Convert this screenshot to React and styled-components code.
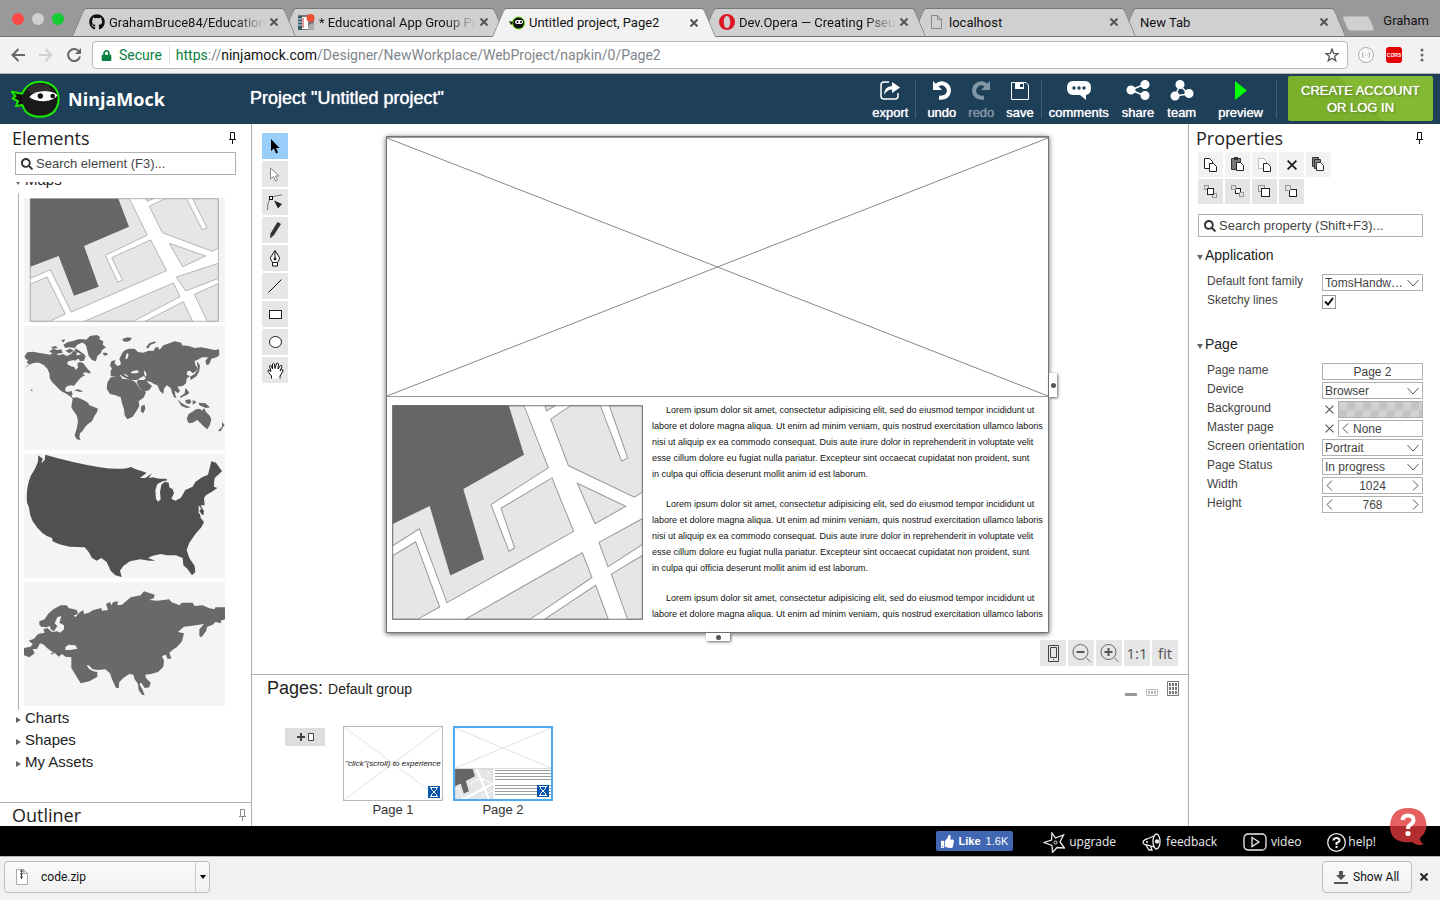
import React from "react";
import styled, { createGlobalStyle, css } from "styled-components";
import { FaGithub, FaSearch, FaThumbsUp, FaLock } from "react-icons/fa";

const ui = '"Liberation Sans", Arial, sans-serif';
const chromeFont = 'Roboto, "Helvetica Neue", sans-serif';
const humanist = '"Open Sans", "Segoe UI", sans-serif';
const hand = 'TomsHandwritten, "Liberation Sans", sans-serif';
const line = "#b0b0b0";

const Global = createGlobalStyle`
  *, *::before, *::after { box-sizing: border-box; }
  body { margin: 0; background: #fff; font-family: ${ui}; font-size: 13px; color: #333; }
  button, input, select { font: inherit; color: inherit; margin: 0; }
  button { border: 0; padding: 0; background: none; cursor: pointer; }
  a { color: inherit; text-decoration: none; }
  h1, h2, h3, p, ul { margin: 0; padding: 0; font-weight: normal; }
  svg { display: block; }
`;

const Window = styled.div`
  display: flex;
  flex-direction: column;
  height: 100vh;
  min-height: 640px;
  overflow: hidden;
`;

/* ---------- browser frame ---------- */

const TabStrip = styled.div`
  display: flex;
  align-items: flex-end;
  height: 37px;
  flex: none;
  padding: 0 11px 0 8px;
  background: #999;
  box-shadow: inset 0 -1px #737373;
  font-family: ${chromeFont};
  isolation: isolate;
`;
const Lights = styled.div`
  display: flex;
  gap: 8px;
  align-self: flex-start;
  width: 64px;
  flex: none;
  padding: 13px 4px;
`;
const Light = styled.button`
  width: 12px;
  height: 12px;
  border-radius: 50%;
  background: ${(p) => p.$color};
`;
const Tab = styled.div`
  position: relative;
  z-index: ${(p) => p.$z};
  isolation: isolate;
  display: flex;
  align-items: center;
  flex: 0 1 224px;
  min-width: 0;
  height: ${(p) => (p.$active ? 29 : 28)}px;
  margin-bottom: ${(p) => (p.$active ? 0 : 1)}px;
  margin-right: -14px;
  padding: 0 18px 0 ${(p) => (p.$icon ? 16 : 18)}px;
  gap: 4px;
  color: #111;
  &::before,
  &::after {
    content: "";
    position: absolute;
    z-index: -1;
    top: 0;
    bottom: 0;
    background: ${(p) => (p.$active ? "#f2f2f2" : "#d0d0d0")};
    border: 0 solid #777;
    border-top-width: 1px;
  }
  &::before {
    left: 6px;
    right: 40%;
    border-left-width: 1px;
    border-top-left-radius: 3px;
    transform: skewX(-23deg);
  }
  &::after {
    right: 6px;
    left: 40%;
    border-right-width: 1px;
    border-top-right-radius: 3px;
    transform: skewX(23deg);
  }
`;
const TabTitle = styled.button`
  flex: 1;
  min-width: 0;
  overflow: hidden;
  white-space: nowrap;
  text-align: left;
  font-size: 13px;
  ${(p) => p.$fade && css`mask-image: linear-gradient(90deg, #000 80%, transparent);`}
`;
const IconSlot = styled.span`
  display: grid;
  place-items: center;
  width: 17px;
  height: 17px;
  flex: none;
`;
const NewTab = styled.button`
  width: 27px;
  height: 15px;
  margin: 0 0 6px 13px;
  border: 1px solid #b8b8b8;
  border-radius: 3px;
  background: #d0d0d0;
  transform: skewX(23deg);
`;
const Profile = styled.span`
  margin: 0 0 9px auto;
  font-size: 13px;
  color: #111;
`;
const Toolbar = styled.div`
  display: flex;
  align-items: center;
  flex: none;
  height: 37px;
  padding: 0 4px 0 10px;
  background: #f2f2f2;
  border-bottom: 1px solid #b5b5b5;
  font-family: ${chromeFont};
`;
const ChromeButton = styled.button`
  display: grid;
  place-items: center;
  width: 28px;
  height: 28px;
  margin-left: ${(p) => (p.$first ? -6 : 0)}px;
  flex: none;
`;
const Address = styled.form`
  display: flex;
  align-items: center;
  flex: 1;
  height: 28px;
  margin: 0 4px;
  padding: 0 8px;
  border: 1px solid #b9b9b9;
  border-radius: 4px;
  background: #fff;
  font-size: 14px;
  color: #80868b;
`;
const Secure = styled.span`
  display: flex;
  align-items: center;
  gap: 7px;
  padding-right: 7px;
  margin-right: 6px;
  border-right: 1px solid #ddd;
  line-height: 20px;
  color: #0b8043;
`;
const Url = styled.a`
  flex: 1;
  b { font-weight: normal; color: #111; }
  i { font-style: normal; color: #0b8043; }
`;

/* ---------- application header ---------- */

const Header = styled.header`
  display: flex;
  align-items: center;
  flex: none;
  height: 50px;
  padding: 0 7px 1px 10px;
  background: #1d3f58;
  color: #fff;
`;
const Brand = styled.a`
  display: flex;
  align-items: center;
  gap: 6px;
  width: 240px;
  flex: none;
  font: 700 18px/24px ${humanist};
`;
const ProjectTitle = styled.h1`
  flex: 1;
  font-size: 18px;
  text-shadow: 0 0 1px #fff;
`;
const ToolGroup = styled.div`
  display: flex;
  gap: ${(p) => p.$gap || 12}px;
  height: 38px;
  padding: 0 ${(p) => p.$right || 7}px 0 ${(p) => p.$left || 7}px;
  border-right: ${(p) => (p.$open ? 0 : 1)}px solid #3f5f76;
`;
const HeaderTool = styled.button`
  display: flex;
  flex-direction: column;
  align-items: center;
  gap: 3px;
  font-size: 13px;
  line-height: 16px;
  text-shadow: 0 0 1px currentColor;
  color: ${(p) => (p.$off ? "#8296a5" : "#fff")};
  svg { height: 22px; flex: none; }
`;
const Cta = styled.button`
  width: 145px;
  height: 45px;
  margin-left: 11px;
  border-radius: 2px;
  background: linear-gradient(45deg, #7ab02c 50%, #84b933 50%);
  font-size: 13px;
  line-height: 17px;
  text-shadow: 0 0 1px #fff, 1px 1px 2px #4c7015;
`;

/* ---------- work area ---------- */

const Body = styled.div`
  display: flex;
  flex: 1;
  min-height: 0;
`;
const Side = styled.aside`
  display: flex;
  flex-direction: column;
  width: 252px;
  flex: none;
  border: 0 solid ${line};
  border-${(p) => p.$edge}-width: 1px;
`;
const PanelHead = styled.div`
  display: flex;
  align-items: center;
  justify-content: space-between;
  flex: none;
  height: ${(p) => (p.$short ? 23 : 28)}px;
  padding: 0 ${(p) => p.$right}px 0 ${(p) => p.$left}px;
`;
const PanelTitle = styled.h2`
  font: 18px/24px ${humanist};
  color: #222;
`;
const SearchBox = styled.label`
  display: flex;
  align-items: center;
  gap: 3px;
  flex: none;
  height: 23px;
  margin: 0 ${(p) => p.$right}px 0 ${(p) => p.$left}px;
  padding: 0 5px;
  border: 1px solid ${line};
  input {
    flex: 1;
    min-width: 0;
    border: 0;
    outline: 0;
    padding: 0;
    background: none;
    &::placeholder { color: #444; opacity: 1; }
  }
`;
const Tree = styled.div`
  flex: 1;
  min-height: 0;
  margin-top: 7px;
  padding-left: 15px;
  overflow: hidden;
`;
const TreeItem = styled.button`
  display: flex;
  align-items: baseline;
  gap: 4px;
  height: 22px;
  margin-top: ${(p) => (p.$scrolled ? -13 : 0)}px;
  font-size: 15px;
  line-height: 22px;
  color: #222;
`;
const MapList = styled.div`
  display: flex;
  flex-direction: column;
  gap: 4px;
  margin: 2px 0 -3px 3px;
  padding: 5px 0 4px 5px;
  border-left: 1px solid ${line};
`;
const MapTile = styled.button`
  width: 201px;
  height: 124px;
  flex: none;
  background: #f4f4f4;
`;
const Outliner = styled.div`
  flex: none;
  border-top: 1px solid ${line};
`;

const Main = styled.main`
  display: flex;
  flex-direction: column;
  flex: 1;
  min-width: 0;
`;
const Stage = styled.section`
  position: relative;
  display: flex;
  flex: 1;
  min-height: 0;
  padding: 9px 0 0 10px;
`;
const ToolColumn = styled.div`
  display: flex;
  flex-direction: column;
  gap: 2px;
  flex: none;
`;
const Square = styled.button`
  display: grid;
  place-items: center;
  width: 26px;
  height: 26px;
  background: ${(p) => (p.$on ? "#99cefb" : "#e6e6e6")};
  font: 15px/24px ${humanist};
  white-space: nowrap;
  color: #555;
`;
const ArtboardArea = styled.div`
  display: flex;
  justify-content: center;
  align-items: flex-start;
  flex: 1;
  min-width: 0;
  padding: 3px 41px 0 0;
`;
const Artboard = styled.article`
  position: relative;
  width: 663px;
  max-width: 100%;
  border: 1px solid #777;
  box-shadow: 0 1px 5px rgba(0, 0, 0, 0.65);
`;
const Placeholder = styled.div`
  height: 260px;
  border: 1px solid #999;
  border-width: 1px 0;
  svg { width: 100%; height: 100%; }
`;
const Split = styled.div`
  display: flex;
  gap: 9px;
  height: 235px;
  padding: 8px 5px 7px 5px;
`;
const Copy = styled.div`
  flex: 1;
  height: 220px;
  margin-top: -3px;
  overflow: hidden;
  white-space: pre;
  font: 9px/16px ${hand};
  color: #111;
  p { margin-bottom: 14px; text-indent: 14px; }
`;
const Handle = styled.button`
  position: absolute;
  display: grid;
  place-items: center;
  background: #fff;
  box-shadow: 1px 1px 3px rgba(0, 0, 0, 0.6);
  &::after { content: ""; width: 5px; height: 5px; border-radius: 50%; background: #555; }
  ${(p) =>
    p.$side === "right"
      ? css`right: -9px; top: 236px; width: 8px; height: 24px;`
      : css`bottom: -9px; left: 319px; width: 24px; height: 8px;`}
`;
const ZoomBar = styled.div`
  position: absolute;
  right: 10px;
  bottom: 8px;
  display: flex;
  gap: 2px;
`;

const PagesPanel = styled.section`
  flex: none;
  border-top: 1px solid ${line};
  padding: 2px 9px 8px 15px;
`;
const PagesHead = styled.div`
  display: flex;
  align-items: baseline;
  gap: 5px;
  height: 22px;
  font-size: 14px;
  line-height: 22px;
  color: #222;
  h2 { font-size: 18px; }
`;
const ViewModes = styled.div`
  display: flex;
  align-items: flex-end;
  align-self: center;
  gap: 9px;
  margin-left: auto;
`;
const PagesRow = styled.div`
  display: flex;
  gap: 10px;
  padding: 27px 0 0 18px;
`;
const AddPage = styled.button`
  display: flex;
  align-items: center;
  justify-content: center;
  gap: 3px;
  width: 40px;
  height: 18px;
  margin: 2px 8px 0 0;
  background: #dedede;
`;
const Thumb = styled.figure`
  margin: 0;
  width: 100px;
  text-align: center;
  font-size: 13px;
  line-height: 17px;
`;
const ThumbPage = styled.div`
  position: relative;
  display: flex;
  flex-direction: column;
  height: 75px;
  overflow: hidden;
  border: ${(p) => (p.$on ? "2px solid #4cabf7" : "1px solid #b8b8b8")};
`;
const ThumbImage = styled.div`
  display: grid;
  grid-template: minmax(0, 1fr) / minmax(0, 1fr);
  flex: ${(p) => (p.$full ? "1 1 0" : "0 0 41px")};
  min-height: 0;
  border-bottom: ${(p) => (p.$full ? 0 : 1)}px solid #ddd;
  font: italic 8px/12px ${hand};
  color: #111;
  > * { grid-area: 1 / 1; }
  span { place-self: center; white-space: nowrap; }
  svg { width: 100%; height: 100%; }
`;
const ThumbRow = styled.div`
  display: flex;
  flex: 1;
  gap: 2px;
`;
const ThumbText = styled.div`
  flex: 1;
  display: flex;
  flex-direction: column;
  gap: 5px;
  padding-top: 1px;
`;
const ThumbLines = styled.div`
  height: 10px;
  background: repeating-linear-gradient(#9b9f99 0 1px, #fff 1px 3px);
`;
const Badge = styled.span`
  position: absolute;
  right: 2px;
  bottom: 2px;
  display: grid;
  place-items: center;
  width: 12px;
  height: 12px;
  background: #0a57b0;
`;

/* ---------- properties ---------- */

const IconGrid = styled.div`
  display: grid;
  grid-template-columns: repeat(5, 25px);
  gap: 2px;
  margin: 0 0 10px 9px;
`;
const PropButton = styled.button`
  display: grid;
  place-items: center;
  height: 25px;
  background: ${(p) => (p.$dark ? "#e5e5e5" : "#f2f2f2")};
`;
const Section = styled.section`
  padding: 8px 17px 0 8px;
  margin-bottom: 15px;
`;
const SectionTitle = styled.h3`
  display: flex;
  align-items: baseline;
  gap: 2px;
  font-size: 14px;
  line-height: 20px;
  color: #222;
  margin-bottom: 8px;
`;
const Field = styled.div`
  display: flex;
  height: 19px;
  padding-left: 10px;
  font-size: 12px;
  label { flex: 1; line-height: 16px; color: #444; }
`;
const Control = styled.div`
  position: relative;
  display: flex;
  align-items: center;
  gap: 1px;
  width: 101px;
  height: 17px;
  margin-top: 1px;
  color: #444;
  > svg { position: absolute; right: 4px; pointer-events: none; }
`;
const Clear = styled.button`
  display: grid;
  place-items: center;
  width: 15px;
  height: 17px;
`;
const box = css`
  flex: 1;
  min-width: 0;
  height: 17px;
  border: 1px solid ${line};
  border-radius: 0;
  background: #fff;
  outline: 0;
`;
const Select = styled.select`
  ${box}
  appearance: none;
  padding: 0 18px 0 2px;
`;
const TextInput = styled.input`
  ${box}
  padding: 0;
  text-align: center;
`;
const Stepper = styled.div`
  ${box}
  display: flex;
  align-items: center;
  padding: 0 3px;
  input {
    flex: 1;
    min-width: 0;
    height: 14px;
    padding: 0 0 0 ${(p) => (p.$left ? 4 : 0)}px;
    border: 0;
    outline: 0;
    text-align: ${(p) => (p.$left ? "left" : "center")};
  }
`;
const Swatch = styled.button`
  ${box}
  background: repeating-conic-gradient(#c4c4c4 0 25%, #d1d1d1 0 50%) 0 0 / 16px 16px;
`;
const Check = styled.input`
  appearance: none;
  width: 14px;
  height: 14px;
  border: 1px solid #999;
  & + svg { left: 2px; }
`;

/* ---------- footer and downloads ---------- */

const Footer = styled.footer`
  position: relative;
  display: flex;
  align-items: center;
  justify-content: flex-end;
  gap: 26px;
  flex: none;
  height: 30px;
  padding-right: 64px;
  background: #000;
  color: #eee;
  font: 12px/20px ${humanist};
`;
const FooterLink = styled.a`
  display: flex;
  align-items: center;
  gap: ${(p) => p.$gap || 4}px;
  padding-top: 2px;
`;
const Like = styled.button`
  display: flex;
  align-items: center;
  gap: 5px;
  height: 20px;
  margin-right: 4px;
  padding: 0 5px;
  border-radius: 2px;
  background: #4267b2;
  color: #fff;
  font: 11px/20px ${ui};
`;
const Bubble = styled.button`
  position: absolute;
  right: 13px;
  bottom: 10px;
`;
const Downloads = styled.div`
  display: flex;
  align-items: center;
  justify-content: space-between;
  flex: none;
  height: 44px;
  padding: 0 12px 3px 4px;
  border-top: 1px solid #b5b5b5;
  background: #f1f1f1;
  font: 12px/16px ${chromeFont};
  color: #111;
`;
const Pill = styled.div`
  display: flex;
  align-items: center;
  height: 32px;
  border: 1px solid #bdbdbd;
  border-radius: 4px;
  background: linear-gradient(#fafafa, #f1f1f1);
  width: ${(p) => p.$w}px;
`;
const PillMain = styled.button`
  display: flex;
  align-items: center;
  gap: ${(p) => p.$gap}px;
  flex: 1;
  padding-left: 11px;
  height: 30px;
`;
const PillMenu = styled.button`
  display: grid;
  place-items: center;
  width: 14px;
  height: 30px;
  border-left: 1px solid #ccc;
`;
const Row = styled.div`
  display: flex;
  align-items: center;
  gap: 8px;
`;

/* ---------- drawings ---------- */

const Cross = ({ size = 8, color = "#555", w = 2 }) => (
  <svg width={size} height={size} viewBox="0 0 8 8" stroke={color} strokeWidth={w} fill="none">
    <path d="M0.5 0.5L7.5 7.5M7.5 0.5L0.5 7.5" />
  </svg>
);
const Pin = ({ color = "#111" }) => (
  <svg width="7" height="12" viewBox="0 0 7 12" fill="none" stroke={color}>
    <path d="M1.500 7V0.500H5.500V7M0 7.500H7M3.500 8V12" />
  </svg>
);
const Arrow = ({ open }) => (
  <svg width="6" height="6" viewBox="0 0 6 6" fill="#666">
    <path d={open ? "M0 1H6L3 6Z" : "M1 0L6 3L1 6Z"} />
  </svg>
);
const Chevron = () => (
  <svg width="12" height="8" viewBox="0 0 12 8" fill="none" stroke="#555">
    <path d="M0.5 1L6 7L11.5 1" />
  </svg>
);
const Angle = ({ right }) => (
  <svg width="7" height="11" viewBox="0 0 7 11" fill="none" stroke="#555">
    <path d={right ? "M1 0.5L6 5.5L1 10.5" : "M6 0.5L1 5.5L6 10.5"} />
  </svg>
);

const NinjaLogo = () => (
  <svg width="52" height="38" viewBox="30 240 156 114">
    <path d="M35 275L66 281Q84 244 122 245Q176 250 176 298Q172 350 118 350Q78 350 67 315L48 318L54 303L38 296L46 288Z" fill="#191919" stroke="#19e800" strokeWidth="6" strokeLinejoin="round" />
    <path d="M40 280L66 286L64 310L52 314L62 302L44 294L62 292Z" fill="#0d0d0d" />
    <ellipse cx="118" cy="268" rx="34" ry="16" fill="#444" opacity="0.5" />
    <path d="M88 290Q104 274 136 273Q162 274 172 286Q166 300 132 304Q100 303 88 290Z" fill="#fff" />
    <circle cx="121" cy="288" r="8" fill="#111" />
    <circle cx="158" cy="288" r="7" fill="#111" />
  </svg>
);
const NinjaSmall = () => (
  <svg width="16" height="14" viewBox="0 0 16 14">
    <ellipse cx="9.500" cy="7" rx="6" ry="6" fill="#111" stroke="#6fd400" />
    <path d="M0 5L5 6L2 9Z" fill="#111" stroke="#6fd400" strokeWidth="0.5" />
    <rect x="6" y="4" width="8" height="4" rx="2" fill="#fff" />
    <circle cx="8.500" cy="6" r="1" /><circle cx="12" cy="6" r="1" />
  </svg>
);
const AppFavicon = () => (
  <svg width="17" height="17" viewBox="0 0 17 17">
    <rect x="0" y="1" width="16" height="15" fill="#777" />
    <path d="M0 2H4V16H0Z" fill="#3b5c63" /><path d="M0 5H4M0 8H4M0 11H4" stroke="#d0e0e0" />
    <rect x="4" y="3" width="6" height="12" fill="#fff" /><path d="M5 4V14" stroke="#b33" />
    <path d="M10 11L16 9V16H10Z" fill="#aaa" />
    <circle cx="12.500" cy="4" r="4" fill="#ed4f32" />
  </svg>
);
const OperaO = () => (
  <svg width="16" height="16" viewBox="0 0 16 16">
    <path fillRule="evenodd" fill="#dd1425" d="M8 0A8 8 0 1 1 8 16A8 8 0 1 1 8 0ZM8 2C5.800 2 4.800 5 4.800 8S5.800 14 8 14S11.200 11 11.200 8S10.200 2 8 2Z" />
  </svg>
);
const FileIcon = () => (
  <svg width="11" height="14" viewBox="0 0 11 14" fill="none" stroke="#888">
    <path d="M0.5 0.5H6.5L10.500 4.500V13.500H0.500ZM6.500 0.500V4.500H10.500" />
  </svg>
);
const ZipIcon = () => (
  <svg width="12" height="16" viewBox="0 0 12 16">
    <path d="M0.5 0.5H7.5L11.500 4.500V15.500H0.500Z" fill="#fff" stroke="#aaa" />
    <path d="M7.500 0.500V4.500H11.500Z" fill="#ddd" stroke="#aaa" />
    <path d="M5.500 1V9" stroke="#444" strokeWidth="2" strokeDasharray="2 1" />
    <path d="M5.500 2V10" stroke="#444" />
  </svg>
);

const headerIcons = {
  export: (
    <svg width="20" height="22" viewBox="0 0 20 22" fill="none" stroke="#fff" strokeWidth="1.500">
      <path d="M9 2H4Q1 2 1 5V16Q1 19 4 19H15Q18 19 18 16V13" />
      <path d="M4 15Q4 6.500 12 6V2L20 7.500L12 13V9.500Q7 9.500 4 15Z" fill="#fff" stroke="none" />
    </svg>
  ),
  undo: (
    <svg width="20" height="22" viewBox="0 0 20 22" fill="none" stroke="currentColor" strokeWidth="4">
      <path d="M4 6Q9 1.500 13.500 4.500Q18 7.500 16.500 13Q14.500 18.500 7 17.500" />
      <path d="M1 1V10H10Z" fill="currentColor" stroke="none" />
    </svg>
  ),
  redo: (
    <svg width="20" height="22" viewBox="0 0 20 22" fill="none" stroke="currentColor" strokeWidth="4">
      <path d="M16 6Q11 1.500 6.500 4.500Q2 7.500 3.500 13Q5.500 18.500 13 17.500" />
      <path d="M19 1V10H10Z" fill="currentColor" stroke="none" />
    </svg>
  ),
  save: (
    <svg width="18" height="22" viewBox="0 0 18 22">
      <path d="M0.500 2.500H15L17.500 5V19.500H0.500Z" fill="none" stroke="#fff" />
      <path d="M4 3H13V9H4Z" fill="#fff" /><path d="M9 4H12V7H9Z" fill="#1d3f58" />
    </svg>
  ),
  comments: (
    <svg width="24" height="22" viewBox="0 0 24 22">
      <path d="M6 1H18Q24 1 24 8Q24 14 19 15V20L13 15H6Q0 15 0 8Q0 1 6 1Z" fill="#fff" />
      <g fill="#1d3f58"><circle cx="7" cy="8" r="1.700" /><circle cx="12" cy="8" r="1.700" /><circle cx="17" cy="8" r="1.700" /></g>
    </svg>
  ),
  share: <svg width="24" height="22" viewBox="0 0 24 22" stroke="#fff" strokeWidth="1.500" fill="#fff"><path d="M19 4L5 10L19 16" fill="none" /><circle cx="19" cy="4.500" r="3.800" /><circle cx="5" cy="10" r="3.800" /><circle cx="19" cy="15.500" r="3.800" /></svg>,
  team: <svg width="24" height="22" viewBox="0 0 24 22" stroke="#fff" strokeWidth="1.500" fill="#fff"><path d="M10 5L5 16L18 14Z" fill="none" /><circle cx="10" cy="4.500" r="3.800" /><circle cx="5" cy="16" r="3.800" /><circle cx="19" cy="13.500" r="3.800" /></svg>,
  preview: <svg width="14" height="22" viewBox="0 0 14 22" fill="#0f0"><path d="M1 1L13 10.500L1 20Z" /></svg>,
};

const canvasTools = [
  ["Select", <svg width="10" height="15" viewBox="0 0 10 15" fill="#000"><path d="M1 0V12L4 9.500L6 14.500L8 13.500L6 9H9.500Z" /></svg>],
  ["Direct select", <svg width="10" height="15" viewBox="0 0 10 15" fill="#fff" stroke="#888"><path d="M0.5 1V12L3.500 9.500L5.500 14L7.500 13L5.500 9H9Z" /></svg>],
  ["Edit points", <svg width="18" height="18" viewBox="0 0 18 18" fill="none" stroke="#777"><path d="M6 4Q10 2.500 16 2M3.500 7Q1 11 1.500 17" /><rect x="3.500" y="3.500" width="3" height="3" fill="#fff" stroke="#111" /><path d="M8 7.500L16 11L12 15.500Z" fill="#222" stroke="none" /></svg>],
  ["Pencil", <svg width="12" height="17" viewBox="0 0 12 17" fill="#333"><path d="M8.500 0L12 2L5 13L1 16.500L1.500 11.500Z" /></svg>],
  ["Pen", <svg width="12" height="17" viewBox="0 0 12 17" fill="#fff" stroke="#111"><path d="M3.500 12.500Q1 9 1.500 7.500L6 0.500L10.500 7.500Q11 9 8.500 12.500Z" /><path d="M3.500 12.500H8.500V16H3.500ZM6 1V9" /><circle cx="6" cy="9" r="1" fill="#111" /></svg>],
  ["Line", <svg width="14" height="14" viewBox="0 0 14 14" stroke="#111"><path d="M0.500 13.500L13.500 0.500" /></svg>],
  ["Rectangle", <svg width="13" height="9" viewBox="0 0 13 9"><rect x="0.500" y="0.500" width="12" height="8" fill="#fff" stroke="#222" /></svg>],
  ["Ellipse", <svg width="13" height="12" viewBox="0 0 13 12"><ellipse cx="6.500" cy="6" rx="6" ry="5.500" fill="#fff" stroke="#222" /></svg>],
  ["Pan", <svg width="17" height="17" viewBox="0 0 17 17" fill="#fff" stroke="#111"><path d="M4.500 16.500V14L1 9.500Q0.500 8 2 8L4 9.500L2.500 4.500Q2.500 3 4 3.500L5.500 7L5.500 2Q6.500 0.500 7.500 2L8 6.500L9.500 1.500Q11 0.500 11.500 2L11 7L13.500 3.500Q15 3 15 4.500L13 9L14.500 7.500Q16.500 7.500 16 9L13 14V16.500" /></svg>],
];

const Magnifier = ({ plus }) => (
  <svg width="19" height="20" viewBox="0 0 19 20" fill="none" stroke="#666">
    <circle cx="8.500" cy="9" r="7.500" />
    <path d="M14.500 15L18.500 19" />
    <path d={plus ? "M4.500 9H12.500M8.500 5V13" : "M4.500 9H12.500"} stroke="#555" strokeWidth="2" />
  </svg>
);

const sheet = "M0.500 0.500H5.500L8.500 3.500V10.500H0.500Z";
const smallSheet = "M0.500 0.500H4.500L7.500 3.500V8.500H0.500Z";
const propIcons = [
  ["Copy", <svg width="14" height="14" viewBox="0 0 14 14" fill="#fff" stroke="#222"><path d={sheet} /><path d={smallSheet} transform="translate(5 5)" /></svg>],
  ["Paste", <svg width="14" height="15" viewBox="0 0 14 15"><path d="M0.500 1.500H9.500V12.500H0.500Z" fill="#777" stroke="#333" /><path d="M3 0H7V3H3Z" fill="#333" /><path d={smallSheet} transform="translate(5 5)" fill="#fff" stroke="#222" /></svg>],
  ["Cut", <svg width="14" height="14" viewBox="0 0 14 14" fill="#fff"><path d={sheet} stroke="#888" strokeDasharray="1 1" /><path d={smallSheet} transform="translate(5 5)" stroke="#222" /></svg>],
  ["Delete", <Cross size={10} color="#222" w={1.5} />],
  ["Duplicate", <svg width="13" height="15" viewBox="0 0 13 15" fill="#888" stroke="#333"><path d="M0.500 0.500H6.500V9.500H0.500Z" /><path d="M2.500 2.500H8.500V11.500H2.500Z" /><path d={smallSheet} transform="translate(4 5)" fill="#fff" /></svg>],
];
const arrange = ["Bring to front", "Bring forward", "Send backward", "Send to back"];
const ArrangeIcon = ({ kind }) => {
  const grey = (x, y, s) => <rect x={x + 0.5} y={y + 0.5} width={s} height={s} fill="#e5e0d8" stroke="#999" />;
  const top = (x, y, s) => <rect x={x + 0.5} y={y + 0.5} width={s} height={s} fill="#fff" stroke="#222" />;
  return (
    <svg width="13" height="13" viewBox="0 0 13 13">
      {kind === 0 && <>{grey(0, 0, 4)}{grey(8, 8, 4)}{top(3, 3, 6)}</>}
      {kind === 1 && <>{top(4, 3, 5)}{grey(0, 0, 4)}{grey(8, 7, 4)}</>}
      {kind === 2 && <>{grey(0, 0, 6)}{top(3, 3, 8)}</>}
      {kind === 3 && <>{top(4, 4, 7)}{grey(0, 0, 5)}</>}
    </svg>
  );
};

const StreetTile = () => (
  <svg width="201" height="124" viewBox="72 234 603 372">
    <path d="M91 236H655V604H91Z" fill="#fff" />
    <g fill="#e6e6e6" stroke="#b5b5b5" strokeWidth="3">
      <path d="M91 236H388L442 345L316 406L353 486L368 481L335 413L452 360L500 452L214 576L151 449L91 475Z" />
      <path d="M91 493L141 471L196 582L148 604H91Z" />
      <path d="M253 604L520 489L540 530L400 604Z" />
      <path d="M436 604L550 545L578 604Z" />
      <path d="M437 236L442 244L460 236Z" />
      <path d="M448 259L495 236H560L607 330L621 323L578 236H655V384L637 394L487 338Z" />
      <path d="M508 370L617 408L548 440Z" />
      <path d="M529 471L655 430V475L557 513Z" />
      <path d="M583 523L655 491V604H622Z" />
      <path d="M91 236H655V604H91Z" fill="none" />
    </g>
    <path d="M91 236H355L387 320L252 378L296 500L222 527L176 408L91 440Z" fill="#666" />
  </svg>
);
const StreetMap = ({ width, height }) => (
  <svg width={width} height={height} viewBox="36 104 753 643" preserveAspectRatio="none">
    <path d="M38 106H787V745H38Z" fill="#fff" />
    <g fill="#e6e6e6" stroke="#999" strokeWidth="3">
      <path d="M38 106H432L505 292L333 402L387 542L404 531L363 413L516 322L581 482L201 695L118 474L38 525Z" />
      <path d="M38 555L107 513L179 708L112 745H38Z" />
      <path d="M255 745L607 546L636 620L450 745Z" />
      <path d="M493 745L647 643L685 745Z" />
      <path d="M495 106L499 122L526 106Z" />
      <path d="M512 146L572 106H661L725 272L743 262L688 106H787V365L763 380L565 285Z" />
      <path d="M592 338L737 407L645 459Z" />
      <path d="M657 515L787 444V521L684 588Z" />
      <path d="M694 610L787 554V745H743Z" />
      <path d="M38 106H787V745H38Z" fill="none" stroke="#777" />
    </g>
    <path d="M38 105H386L432 253L250 355L312 565L211 614L149 406L38 460Z" fill="#666" />
  </svg>
);
const WorldMap = () => (
  <svg width="201" height="124" viewBox="72 18 603 372" fill="#696969">
    <path d="M74 108L82 97L98 95L120 99L150 104L162 98L176 106L190 102L200 108L212 103L222 92L232 98L228 106L244 104L256 112L252 122L240 124L236 116L228 120L222 126L206 124L202 130L212 138L222 140L228 150L234 142L232 130L240 126L250 130L262 146L272 156L268 161L256 156L248 162L256 166L244 172L236 180L228 190L222 198L214 196L202 198L196 204L196 214L206 216L214 212L218 222L214 228L222 236L216 234L206 226L196 220L184 214L176 206L166 196L158 188L150 176L148 160L142 146L132 136L118 128L104 128L92 132L72 146L88 132L80 128L84 120L76 116Z" />
    <path d="M148 94L160 86L172 90L184 88L188 98L170 102L156 100ZM152 82L166 78L174 84L160 86ZM190 74L204 66L222 62L234 58L256 58L250 66L232 74L224 84L208 82L196 84ZM184 60L196 58L190 68ZM196 92L210 86L222 92L208 100Z" />
    <path d="M226 84L240 94L254 104L258 112L248 108L236 98L224 94Z" />
    <path d="M246 66L262 56L270 48L290 45L300 50L298 58L310 64L308 74L318 82L306 90L302 100L292 108L288 124L276 120L266 108L262 92L258 76ZM308 98L320 98L324 104L312 107ZM368 56L384 52L396 54L390 62L378 66L368 62ZM92 208L99 211L94 214Z" />
    <path d="M222 210L234 208L250 214L240 216L228 212ZM218 234L230 232L242 236L254 242L264 248L268 256L284 262L294 266L290 278L282 290L276 304L264 312L256 320L248 332L240 340L238 352L242 360L230 358L224 346L230 326L234 304L230 286L220 272L214 262L216 248Z" />
    <path d="M332 152L336 146L330 136L334 124L346 120L344 130L352 138L362 134L362 126L358 118L364 104L372 92L386 86L404 86L414 96L430 98L446 92L462 92L464 84L474 80L478 90L490 76L508 70L524 64L544 68L546 76L566 78L584 84L604 82L626 86L644 90L657 88L658 106L650 112L634 116L628 132L620 136L616 124L624 112L606 112L592 120L584 122L586 134L594 146L588 154L578 160L570 152L562 154L560 164L570 168L560 176L558 190L548 198L532 200L540 212L534 220L524 212L526 226L530 234L522 232L516 218L512 204L500 196L492 206L490 222L480 214L472 196L462 192L452 186L440 182L446 190L456 198L448 210L430 216L418 204L410 186L414 180L430 180L438 176L432 168L424 172L412 180L390 180L372 172L360 164L358 172L344 170L332 168Z" />
    <path d="M332 172L350 170L362 168L366 176L382 178L400 182L408 188L420 208L438 216L432 232L416 244L418 258L410 272L398 290L382 298L374 286L372 268L366 250L362 232L346 226L330 222L320 206L322 188ZM424 258L434 254L436 266L430 280L422 274Z" />
    <path d="M438 82L448 70L464 64L468 68L452 74L444 86ZM590 124L600 136L598 152L590 168L578 176L572 180L570 170L584 162L594 148ZM556 204L562 210L568 218L560 226L552 228L542 234L540 230L554 220ZM532 236L544 248L556 256L572 262L560 264L544 258ZM556 240L570 238L574 246L568 252L558 250ZM578 240L590 246L578 254ZM596 248L616 250L630 262L618 264L598 256Z" />
    <path d="M566 282L576 276L588 268L600 266L606 272L612 264L618 276L628 286L634 298L630 314L622 328L612 320L604 312L592 300L578 308L566 310L560 296ZM666 306L674 316L668 322L662 334L654 332L666 320Z" />
    <path d="M392 156L410 150L418 156L410 160L394 160ZM434 150L440 164L436 170L432 160ZM370 162L380 164L386 172L378 168ZM204 124L222 120L230 128L224 140L212 138L202 132ZM380 98L386 104L382 116L376 118Z" fill="#f4f4f4" />
  </svg>
);
const UsaMap = () => (
  <svg width="201" height="124" viewBox="72 402 603 372" fill="#505050">
    <path d="M115 406L128 416L124 430L134 420L136 404Q210 426 300 442Q350 450 384 444L392 441L408 448L440 458L420 474L436 474L456 460L446 474L458 472L478 476L498 476L502 481L488 484L472 492L466 510L468 536L474 545L482 538L480 516L484 494L494 485L506 488L508 502L518 508L522 520L514 536L526 542L542 534L556 510L578 500L586 486L606 472L624 464L634 424L648 428L666 454L644 474L642 490L642 500L652 504L638 514L618 526L612 534L614 556L602 556L612 574L610 586L600 580L602 594L612 606L604 622L588 640L568 668L560 690L568 714L584 738L586 756L576 766L562 746L550 736L548 714L528 706L500 706L482 702L456 708L444 714L466 722L448 722L420 718L390 724L370 738L360 752L365 771L346 766L332 752L320 726L304 714L290 722L276 714L266 696L254 682L210 680Q174 674 158 664L156 654Q126 648 98 604Q88 584 87 562L81 548Q77 506 92 468Q110 440 114 424Z" />
    <path d="M596 556L604 566L598 572L606 586L596 580Z" fill="#f4f4f4" />
  </svg>
);
const EurasiaMap = () => (
  <svg width="201" height="124" viewBox="72 786 603 372" fill="#696969">
    <path d="M118 914L118 904L134 898L144 882L160 868L182 856L200 856L206 864L230 870L234 882L222 886L226 892L240 876L250 870L252 882L266 878L280 870L304 864L306 872L324 870L318 852L330 846L334 856L340 846L354 844L352 856L366 854L392 832L422 826L432 814L464 824L462 834L448 840L472 842L508 838L514 846L538 856L546 848L578 848L584 858L608 856L626 864L644 868L646 862L675 862L675 898L662 902L664 910L646 906L638 914L622 920L618 934L604 952L598 948L598 928L612 912L588 916L552 920L534 936L552 940L546 964L530 982L520 988L508 998L514 1016L502 1016L498 1004L486 1008L492 1022L490 1040L474 1056L452 1062L436 1064L438 1074L452 1088L448 1102L434 1104L424 1088L418 1092L428 1110L434 1126L426 1124L416 1110L414 1092L404 1078L400 1064L388 1062L370 1074L358 1086L356 1104L348 1104L336 1078L330 1060L316 1048L294 1050L278 1048L266 1036L260 1036L268 1048L280 1054L292 1056L292 1070L268 1084L242 1090L230 1070L214 1044L214 1012L196 1010L186 1002L176 1010L164 998L156 1004L148 994L132 974L120 970L112 986L98 988L104 1000L88 1012L72 1006V984L92 980L98 972L86 962L102 956L114 942L134 938L130 928L142 924L156 936L172 934L180 938L192 928L192 916L178 908L184 888L172 892L164 910L172 918L162 934L152 928L150 918L140 922L124 920Z" />
    <path d="M196 982L206 974L226 976L232 986L210 990L196 990ZM136 980L160 998L152 1000L138 988Z" fill="#f4f4f4" />
  </svg>
);
const Diagonals = ({ color }) => (
  <svg viewBox="0 0 100 100" preserveAspectRatio="none" stroke={color}>
    <path d="M0 0L100 100M0 100L100 0" vectorEffect="non-scaling-stroke" />
  </svg>
);
const Hourglass = () => (
  <svg width="8" height="10" viewBox="0 0 8 10" fill="none" stroke="#fff">
    <path d="M0 0.500H8M0 9.500H8M1.500 1V2.500L6.500 7.500V9M6.500 1V2.500L1.500 7.500V9" />
  </svg>
);

const lorem = [
  "Lorem ipsum dolor sit amet, consectetur adipisicing elit, sed do eiusmod tempor incididunt ut",
  "labore et dolore magna aliqua. Ut enim ad minim veniam, quis nostrud exercitation ullamco laboris",
  "nisi ut aliquip ex ea commodo consequat. Duis aute irure dolor in reprehenderit in voluptate velit",
  "esse cillum dolore eu fugiat nulla pariatur. Excepteur sint occaecat cupidatat non proident, sunt",
  "in culpa qui officia deserunt mollit anim id est laborum.",
].join("\n");

const tabs = [
  { title: "GrahamBruce84/Educational", icon: <FaGithub size={16} />, fade: true },
  { title: "* Educational App Group Project", icon: <AppFavicon />, fade: true },
  { title: "Untitled project, Page2", icon: <NinjaSmall />, active: true },
  { title: "Dev.Opera — Creating Pseudo", icon: <OperaO />, fade: true },
  { title: "localhost", icon: <FileIcon /> },
  { title: "New Tab" },
];

function BrowserChrome() {
  return (
    <>
      <TabStrip>
        <Lights>
          <Light $color="#fc4b46" aria-label="Close window" />
          <Light $color="#d0d0d0" aria-label="Minimize window" />
          <Light $color="#15cc35" aria-label="Zoom window" />
        </Lights>
        {tabs.map((t, i) => (
          <Tab key={t.title} $active={t.active} $icon={!!t.icon} $z={t.active ? 10 : 6 - i}>
            {t.icon && <IconSlot>{t.icon}</IconSlot>}
            <TabTitle $fade={t.fade}>{t.title}</TabTitle>
            <button aria-label={`Close ${t.title}`}><Cross /></button>
          </Tab>
        ))}
        <NewTab aria-label="New tab" />
        <Profile>Graham</Profile>
      </TabStrip>
      <Toolbar>
        <ChromeButton $first aria-label="Back">
          <svg width="14" height="14" viewBox="0 0 14 14" fill="none" stroke="#666" strokeWidth="2"><path d="M14 7H1.500M7.500 1L1.500 7L7.500 13" /></svg>
        </ChromeButton>
        <ChromeButton aria-label="Forward">
          <svg width="14" height="14" viewBox="0 0 14 14" fill="none" stroke="#d0d0d0" strokeWidth="2"><path d="M0 7H12.500M6.500 1L12.500 7L6.500 13" /></svg>
        </ChromeButton>
        <ChromeButton aria-label="Reload">
          <svg width="14" height="14" viewBox="0 0 14 14" fill="none" stroke="#666" strokeWidth="2"><path d="M12 3.500A6 6 0 1 0 13 8.500" /><path d="M14 0V6H8Z" fill="#666" stroke="none" /></svg>
        </ChromeButton>
        <Address onSubmit={(e) => e.preventDefault()}>
          <Secure><FaLock size={11} />Secure</Secure>
          <Url href="#page2"><i>https</i>://<b>ninjamock.com</b>/Designer/NewWorkplace/WebProject/napkin/0/Page2</Url>
          <button type="button" aria-label="Bookmark">
            <svg width="14" height="14" viewBox="0 0 14 14" fill="none" stroke="#555" strokeWidth="1.300"><path d="M7 1L8.600 5.300L13.200 5.500L9.600 8.300L10.800 12.800L7 10.200L3.200 12.800L4.400 8.300L0.800 5.500L5.400 5.300Z" /></svg>
          </button>
        </Address>
        <ChromeButton aria-label="JSON extension">
          <svg width="16" height="16" viewBox="0 0 16 16" fill="none" stroke="#aaa"><circle cx="8" cy="8" r="7.500" fill="#fafafa" /><path d="M5.500 5Q4.500 5 4.500 8T5.500 11M10.500 5Q11.500 5 11.500 8T10.500 11M6.500 8H7.500M8.500 8H9.500" /></svg>
        </ChromeButton>
        <ChromeButton aria-label="CORS extension">
          <svg width="16" height="16" viewBox="0 0 16 16"><rect width="16" height="16" rx="3" fill="#e60000" /><text x="8" y="10" fontSize="5" fontWeight="bold" textAnchor="middle" fill="#fff" fontFamily="Liberation Sans">CORS</text></svg>
        </ChromeButton>
        <ChromeButton aria-label="Menu">
          <svg width="4" height="14" viewBox="0 0 4 14" fill="#666"><circle cx="2" cy="2" r="1.500" /><circle cx="2" cy="7" r="1.500" /><circle cx="2" cy="12" r="1.500" /></svg>
        </ChromeButton>
      </Toolbar>
    </>
  );
}

const Tool = ({ name, off }) => (
  <HeaderTool $off={off} disabled={off}>{headerIcons[name]}{name}</HeaderTool>
);

function SelectField({ id, label, value }) {
  return (
    <Field>
      <label htmlFor={id}>{label}</label>
      <Control>
        <Select id={id} defaultValue={value}><option>{value}</option></Select>
        <Chevron />
      </Control>
    </Field>
  );
}
function StepField({ id, label, value }) {
  return (
    <Field>
      <label htmlFor={id}>{label}</label>
      <Control>
        <Stepper>
          <button aria-label={`Decrease ${label}`}><Angle /></button>
          <input id={id} defaultValue={value} />
          <button aria-label={`Increase ${label}`}><Angle right /></button>
        </Stepper>
      </Control>
    </Field>
  );
}

function Elements() {
  return (
    <Side $edge="right">
      <PanelHead $left={12} $right={15}><PanelTitle>Elements</PanelTitle><button aria-label="Pin elements"><Pin /></button></PanelHead>
      <SearchBox $left={15} $right={15}><FaSearch size={12} /><input aria-label="Search element" placeholder="Search element (F3)..." /></SearchBox>
      <Tree>
        <TreeItem $scrolled><Arrow open />Maps</TreeItem>
        <MapList>
          <MapTile aria-label="Street map"><StreetTile /></MapTile>
          <MapTile aria-label="World map"><WorldMap /></MapTile>
          <MapTile aria-label="USA map"><UsaMap /></MapTile>
          <MapTile aria-label="Eurasia map"><EurasiaMap /></MapTile>
        </MapList>
        <TreeItem><Arrow />Charts</TreeItem>
        <TreeItem><Arrow />Shapes</TreeItem>
        <TreeItem><Arrow />My Assets</TreeItem>
      </Tree>
      <Outliner>
        <PanelHead $short $left={12} $right={5}><PanelTitle>Outliner</PanelTitle><button aria-label="Pin outliner"><Pin color="#888" /></button></PanelHead>
      </Outliner>
    </Side>
  );
}

function Properties() {
  return (
    <Side $edge="left">
      <PanelHead $left={7} $right={17}><PanelTitle>Properties</PanelTitle><button aria-label="Pin properties"><Pin /></button></PanelHead>
      <IconGrid>
        {propIcons.map(([name, icon]) => <PropButton key={name} aria-label={name}>{icon}</PropButton>)}
        {arrange.map((name, i) => <PropButton key={name} $dark aria-label={name}><ArrangeIcon kind={i} /></PropButton>)}
      </IconGrid>
      <SearchBox $left={9} $right={17}><FaSearch size={12} /><input aria-label="Search property" placeholder="Search property (Shift+F3)..." /></SearchBox>
      <Section>
        <SectionTitle><Arrow open />Application</SectionTitle>
        <SelectField id="font" label="Default font family" value="TomsHandw…" />
        <Field>
          <label htmlFor="sketchy">Sketchy lines</label>
          <Control>
            <Check id="sketchy" type="checkbox" defaultChecked />
            <svg width="10" height="9" viewBox="0 0 10 9" fill="none" stroke="#111" strokeWidth="2"><path d="M1 4.500L4 7.500L9 1" /></svg>
          </Control>
        </Field>
      </Section>
      <Section>
        <SectionTitle><Arrow open />Page</SectionTitle>
        <Field><label htmlFor="name">Page name</label><Control><TextInput id="name" defaultValue="Page 2" /></Control></Field>
        <SelectField id="device" label="Device" value="Browser" />
        <Field>
          <label htmlFor="bg">Background</label>
          <Control><Clear aria-label="Clear background"><Cross size={9} w={1} /></Clear><Swatch id="bg" /></Control>
        </Field>
        <Field>
          <label htmlFor="master">Master page</label>
          <Control>
            <Clear aria-label="Clear master page"><Cross size={9} w={1} /></Clear>
            <Stepper $left><button aria-label="Pick master page"><Angle /></button><input id="master" defaultValue="None" /></Stepper>
          </Control>
        </Field>
        <SelectField id="orient" label="Screen orientation" value="Portrait" />
        <SelectField id="status" label="Page Status" value="In progress" />
        <StepField id="width" label="Width" value="1024" />
        <StepField id="height" label="Height" value="768" />
      </Section>
    </Side>
  );
}

function Canvas() {
  return (
    <Stage>
      <ToolColumn>
        {canvasTools.map(([name, icon], i) => <Square key={name} aria-label={name} $on={i === 0}>{icon}</Square>)}
      </ToolColumn>
      <ArtboardArea>
        <Artboard>
          <Placeholder><Diagonals color="#888" /></Placeholder>
          <Split>
            <StreetMap width={251} height={215} />
            <Copy><p>{lorem}</p><p>{lorem}</p><p>{lorem}</p></Copy>
          </Split>
          <Handle $side="right" aria-label="Resize width" />
          <Handle $side="bottom" aria-label="Resize height" />
        </Artboard>
      </ArtboardArea>
      <ZoomBar>
        <Square aria-label="Device frame">
          <svg width="11" height="17" viewBox="0 0 11 17" fill="none" stroke="#444"><path d="M0.500 0.500H10.500V16.500H0.500ZM2.500 2.500H8.500V12.500H2.500ZM5 14.500H6" /></svg>
        </Square>
        <Square aria-label="Zoom out"><Magnifier /></Square>
        <Square aria-label="Zoom in"><Magnifier plus /></Square>
        <Square>1:1</Square>
        <Square>fit</Square>
      </ZoomBar>
    </Stage>
  );
}

function Pages() {
  return (
    <PagesPanel>
      <PagesHead>
        <h2>Pages:</h2>
        <span>Default group</span>
        <ViewModes>
          <button aria-label="Collapse"><svg width="12" height="3" fill="#999"><rect width="12" height="3" /></svg></button>
          <button aria-label="Single row"><svg width="12" height="7" viewBox="0 0 12 7" fill="none" stroke="#bbb"><path d="M0.500 0.500H11.500V6.500H0.500Z" /><path d="M2 3.500H10" strokeWidth="3" strokeDasharray="2 1" /></svg></button>
          <button aria-label="Grid"><svg width="12" height="15" viewBox="0 0 12 15" fill="none" stroke="#777"><path d="M0.500 0.500H11.500V14.500H0.500Z" /><path d="M2 3.500H10M2 7.500H10M2 11.500H10" strokeWidth="3" strokeDasharray="2 1" /></svg></button>
        </ViewModes>
      </PagesHead>
      <PagesRow>
        <AddPage aria-label="Add page">
          <svg width="17" height="8" viewBox="0 0 17 8" fill="none" stroke="#444"><path d="M0 4H8M4 0V8" strokeWidth="2" /><path d="M11.500 0.500H16.500V7.500H11.500Z" fill="#fff" /></svg>
        </AddPage>
        <Thumb>
          <ThumbPage>
            <ThumbImage $full><Diagonals color="#e2e2e2" /><span>"click"(scroll) to experience</span></ThumbImage>
            <Badge><Hourglass /></Badge>
          </ThumbPage>
          <figcaption>Page 1</figcaption>
        </Thumb>
        <Thumb>
          <ThumbPage $on>
            <ThumbImage><Diagonals color="#e2e2e2" /></ThumbImage>
            <ThumbRow>
              <StreetMap width={38} height={31} />
              <ThumbText><ThumbLines /><ThumbLines /></ThumbText>
            </ThumbRow>
            <Badge><Hourglass /></Badge>
          </ThumbPage>
          <figcaption>Page 2</figcaption>
        </Thumb>
      </PagesRow>
    </PagesPanel>
  );
}

export default function App() {
  return (
    <>
      <Global />
      <Window>
        <BrowserChrome />
        <Header>
          <Brand href="#home"><NinjaLogo />NinjaMock</Brand>
          <ProjectTitle>Project "Untitled project"</ProjectTitle>
          <ToolGroup><Tool name="export" /></ToolGroup>
          <ToolGroup $left={11}><Tool name="undo" /><Tool name="redo" off /><Tool name="save" /></ToolGroup>
          <ToolGroup $open $gap={13} $right={15}><Tool name="comments" /><Tool name="share" /><Tool name="team" /></ToolGroup>
          <ToolGroup $right={13}><Tool name="preview" /></ToolGroup>
          <Cta>CREATE ACCOUNT<br />OR LOG IN</Cta>
        </Header>
        <Body>
          <Elements />
          <Main>
            <Canvas />
            <Pages />
          </Main>
          <Properties />
        </Body>
        <Footer>
          <Like><FaThumbsUp size={13} /><b>Like</b>1.6K</Like>
          <FooterLink href="#upgrade">
            <svg width="22" height="21" viewBox="0 0 22 21" fill="none" stroke="#eee"><path d="M9 1L12.500 6L20.500 3L17 10L21.500 16L14 15.500L9.500 20.500L9 13.500L1 10.500L8.500 8Z" strokeWidth="1.300" /><circle cx="12.500" cy="10.500" r="1.500" /></svg>upgrade
          </FooterLink>
          <FooterLink href="#feedback">
            <svg width="20" height="18" viewBox="0 0 20 18" fill="none" stroke="#eee" strokeWidth="1.300"><path d="M12 3L5 6Q1 7 1 10Q2 12 5 12L12 14M4 12L7 17H10L8.500 13M4 9H6" /><ellipse cx="14.500" cy="8.500" rx="3.500" ry="7.500" /><circle cx="15" cy="8.500" r="1.500" fill="#eee" /></svg>feedback
          </FooterLink>
          <FooterLink href="#video">
            <svg width="24" height="18" viewBox="0 0 24 18" fill="none" stroke="#eee" strokeWidth="1.300"><rect x="1" y="1" width="22" height="16" rx="4" /><path d="M9 4.500L16 9L9 13.500Z" /></svg>video
          </FooterLink>
          <FooterLink href="#help" $gap={2}>
            <svg width="19" height="19" viewBox="0 0 19 19" fill="none" stroke="#eee"><circle cx="9.500" cy="9.500" r="8.800" strokeWidth="1.300" /><path d="M6.500 7.500Q6.500 5 9.500 5T12.500 7.500Q12.500 9 9.500 10V12M9.500 13V15" strokeWidth="2" /></svg>help!
          </FooterLink>
          <Bubble aria-label="Open support">
            <svg width="38" height="39" viewBox="0 0 38 39"><path d="M19 1Q37 1 37.500 19Q37 26 31 31Q31 36 35 37Q29 40 23 35Q1 37 1 19Q2 1 19 1Z" fill="#e03739" opacity="0.800" /><path d="M13.500 13Q14 8.500 19 8.500Q24.500 8.500 24.500 13Q24.500 16 21 18Q19 19 19 22" fill="none" stroke="#fff" strokeWidth="4" /><circle cx="19" cy="26.500" r="2.600" fill="#fff" /></svg>
          </Bubble>
        </Footer>
        <Downloads>
          <Pill $w={206}>
            <PillMain $gap={13}><ZipIcon />code.zip</PillMain>
            <PillMenu aria-label="Download options"><svg width="6" height="4" viewBox="0 0 6 4"><path d="M0 0H6L3 4Z" /></svg></PillMenu>
          </Pill>
          <Row>
            <Pill $w={90}>
              <PillMain $gap={5}><svg width="14" height="13" viewBox="0 0 14 13" fill="#555"><path d="M5 0H9V4H12L7 9L2 4H5ZM0 11H14V13H0Z" /></svg>Show All</PillMain>
            </Pill>
            <button aria-label="Close downloads"><Cross color="#222" /></button>
          </Row>
        </Downloads>
      </Window>
    </>
  );
}
